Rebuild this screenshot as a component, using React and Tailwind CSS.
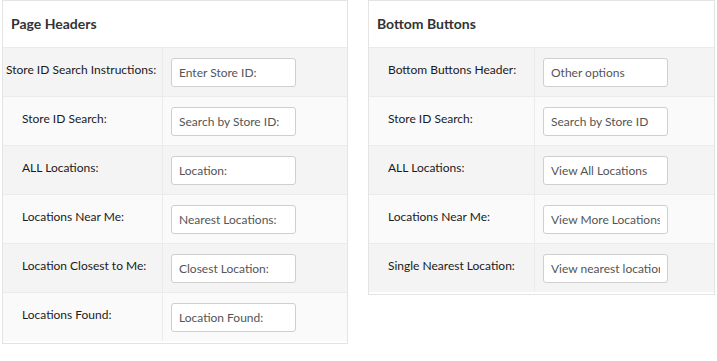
const pageHeaders = [
  { label: "Store ID Search Instructions:", value: "Enter Store ID:", tight: true },
  { label: "Store ID Search:", value: "Search by Store ID:" },
  { label: "ALL Locations:", value: "Location:" },
  { label: "Locations Near Me:", value: "Nearest Locations:" },
  { label: "Location Closest to Me:", value: "Closest Location:" },
  { label: "Locations Found:", value: "Location Found:" },
];

const bottomButtons = [
  { label: "Bottom Buttons Header:", value: "Other options" },
  { label: "Store ID Search:", value: "Search by Store ID" },
  { label: "ALL Locations:", value: "View All Locations" },
  { label: "Locations Near Me:", value: "View More Locations" },
  { label: "Single Nearest Location:", value: "View nearest location" },
];

const Panel = ({ title, rows, labelWidth, padLeft, widthClass }) => {
  return (
    <section className={`${widthClass} bg-white border border-[#e4e4e4] pb-[2px]`}>
      <h2 className="h-[46px] flex items-center pb-[1px] px-[8px] text-[14px] font-bold text-[#333]">
        {title}
      </h2>
      <div>
        {rows.map((row, i) => (
          <div
            key={row.label}
            className={`flex h-[49px] border-t border-[#ebebeb] ${
              i % 2 === 0 ? "bg-[#f4f4f4]" : "bg-[#fafafa]"
            }`}
          >
            <div
              className={`shrink-0 flex items-center pb-[4px] border-r border-[#ebebeb] text-[12px] text-[#1a1a1a] whitespace-nowrap ${labelWidth} ${
                row.tight ? "pl-[3px]" : padLeft
              }`}
            >
              {row.label}
            </div>
            <div className="flex items-center pl-[8px]">
              <input
                readOnly
                value={row.value}
                className="w-[125px] h-[29px] bg-white border border-[#cfcfcf] rounded-[3px] px-[7px] text-[12px] text-[#555] outline-none"
              />
            </div>
          </div>
        ))}
      </div>
    </section>
  );
};

export default function App() {
  return (
    <div
      className="w-[717px] h-[361px] bg-white flex items-start gap-[20px] pl-[2px]"
      style={{ fontFamily: "Lato, 'Open Sans', sans-serif" }}
    >
      <Panel
        title="Page Headers"
        rows={pageHeaders}
        labelWidth="w-[160px]"
        padLeft="pl-[19px]"
        widthClass="w-[346px]"
      />
      <Panel
        title="Bottom Buttons"
        rows={bottomButtons}
        labelWidth="w-[166px]"
        padLeft="pl-[19px]"
        widthClass="w-[347px]"
      />
    </div>
  );
}
